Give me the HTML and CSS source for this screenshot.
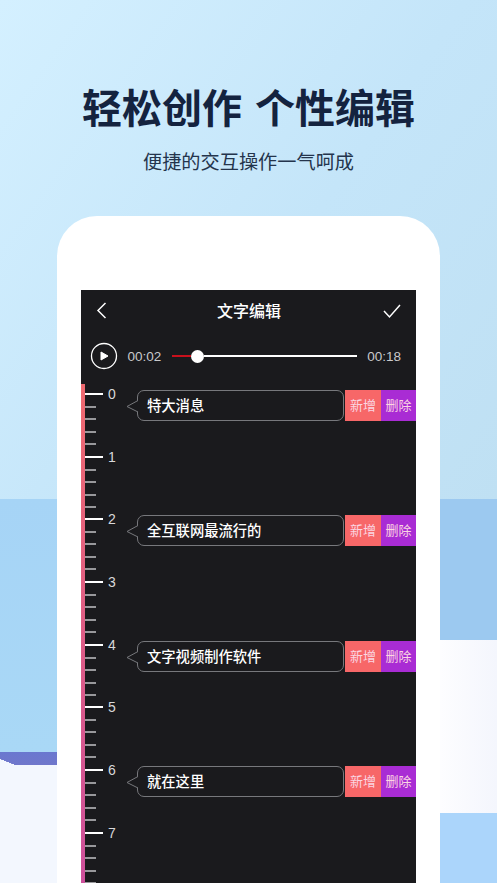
FILE: index.html
```html
<!DOCTYPE html>
<html lang="zh-CN">
<head>
    <meta charset="UTF-8">
    <meta name="viewport" content="width=device-width, initial-scale=1.0">
    <title>轻松创作 个性编辑</title>
    <link rel="stylesheet" href="styles.css">
</head>
<body>
    <div class="page">
        <h1>轻松创作 个性编辑</h1>
        <p class="sub">便捷的交互操作一气呵成</p>
        <div class="phone">
            <div class="screen">
                <div class="nav">
                    <svg class="nav-icon" width="24" height="24" viewBox="0 0 24 24"><path d="M15.5 5 L8 12.5 L15.5 20" fill="none" stroke="#fff" stroke-width="1.5"/></svg>
                    <span class="nav-title">文字编辑</span>
                    <svg class="nav-icon" width="24" height="24" viewBox="0 0 24 24"><path d="M4 13 L9.5 19 L20 7" fill="none" stroke="#fff" stroke-width="1.5"/></svg>
                </div>
                <div class="player">
                    <svg width="28" height="28" viewBox="0 0 28 28"><circle cx="14" cy="14" r="12.5" fill="none" stroke="#fff" stroke-width="1.3"/><path d="M11 10 L18 14 L11 18 Z" fill="#fff" stroke="#fff" stroke-linejoin="round"/></svg>
                    <span class="time">00:02</span>
                    <div class="slider">
                        <div class="slider-done"></div>
                        <div class="slider-knob"></div>
                        <div class="slider-rest"></div>
                    </div>
                    <span class="time">00:18</span>
                </div>
                <div class="timeline">
                    <div class="ruler">
                        <div class="sec"><span>0</span></div>
                        <div class="sec"><span>1</span></div>
                        <div class="sec"><span>2</span></div>
                        <div class="sec"><span>3</span></div>
                        <div class="sec"><span>4</span></div>
                        <div class="sec"><span>5</span></div>
                        <div class="sec"><span>6</span></div>
                        <div class="sec"><span>7</span></div>
                    </div>
                    <div class="captions">
                        <div class="caption">
                            <div class="bubble">
                                <svg class="tail" width="12" height="15" viewBox="0 0 12 15"><path d="M12 1.5 L1 7.5 L12 13" fill="#1a1a1d" stroke="#77787c"/></svg>
                                特大消息
                            </div>
                            <div class="btn btn-add">新增</div>
                            <div class="btn btn-del">删除</div>
                        </div>
                        <div class="caption">
                            <div class="bubble">
                                <svg class="tail" width="12" height="15" viewBox="0 0 12 15"><path d="M12 1.5 L1 7.5 L12 13" fill="#1a1a1d" stroke="#77787c"/></svg>
                                全互联网最流行的
                            </div>
                            <div class="btn btn-add">新增</div>
                            <div class="btn btn-del">删除</div>
                        </div>
                        <div class="caption">
                            <div class="bubble">
                                <svg class="tail" width="12" height="15" viewBox="0 0 12 15"><path d="M12 1.5 L1 7.5 L12 13" fill="#1a1a1d" stroke="#77787c"/></svg>
                                文字视频制作软件
                            </div>
                            <div class="btn btn-add">新增</div>
                            <div class="btn btn-del">删除</div>
                        </div>
                        <div class="caption">
                            <div class="bubble">
                                <svg class="tail" width="12" height="15" viewBox="0 0 12 15"><path d="M12 1.5 L1 7.5 L12 13" fill="#1a1a1d" stroke="#77787c"/></svg>
                                就在这里
                            </div>
                            <div class="btn btn-add">新增</div>
                            <div class="btn btn-del">删除</div>
                        </div>
                    </div>
                </div>
            </div>
        </div>
    </div>
</body>
</html>
```

FILE: styles.css
```css
* {
    box-sizing: border-box;
}
html, body {
    margin: 0;
    padding: 0;
}
body {
    font-family: "Noto Sans CJK SC", "Liberation Sans", sans-serif;
}
.page {
    width: 497px;
    height: 883px;
    overflow: hidden;
    display: flex;
    flex-direction: column;
    align-items: center;
    /* the coloured blocks behind the phone */
    background-color: #f3f7fe;
    background-image:
        linear-gradient(to top right, #f3f7fe 50%, transparent 51%),
        linear-gradient(#6a78cf, #7077cb),
        linear-gradient(#a6d4f6, #a9d8f6),
        linear-gradient(90deg, #fdfdff, #f4f6fd),
        linear-gradient(#abd5fb, #abd5fb),
        linear-gradient(#9cc9f0, #9cc9f0),
        linear-gradient(125deg, #d4f0ff 0%, #c4e5f9 55%, #bfe0f3 100%);
    background-size:
        15px 6px,
        57px 13px,
        57px 253px,
        57px 173px,
        57px 70px,
        57px 141px,
        497px 499px;
    background-position:
        0 759px,
        0 752px,
        0 499px,
        440px 640px,
        440px 813px,
        440px 499px,
        0 0;
    background-repeat: no-repeat;
}
h1 {
    margin: 79px 0 0;
    font-size: 40px;
    line-height: 54px;
    font-weight: 700;
    word-spacing: 4px;
    color: #14233f;
    white-space: nowrap;
}
.sub {
    margin: 15px 0 0;
    font-size: 19.2px;
    line-height: 26px;
    color: #24344c;
}
.phone {
    margin-top: 42px;
    width: 383px;
    flex: 1;
    padding: 74px 24px 0;
    background: #fff;
    border-radius: 40px 40px 0 0;
}
.screen {
    height: 100%;
    background: #1a1a1d;
    color: #fff;
    overflow: hidden;
}
.nav {
    height: 42px;
    padding: 0 12px 3px 9px;
    display: flex;
    justify-content: space-between;
    align-items: center;
}
.nav-title {
    margin-left: 4px;
    font-size: 16px;
    font-weight: 500;
}
.player {
    height: 52px;
    padding: 0 15px 4px 9px;
    display: flex;
    align-items: center;
    gap: 9.5px;
}
.time {
    font-family: "Liberation Sans", sans-serif;
    font-size: 13.5px;
    color: #c9c9cb;
}
.slider {
    flex: 1;
    margin: 0 1px;
    display: flex;
    align-items: center;
}
.slider-done {
    width: 19px;
    height: 2px;
    background: #c9101c;
}
.slider-knob {
    width: 13px;
    height: 13px;
    border-radius: 50%;
    background: #fff;
}
.slider-rest {
    flex: 1;
    height: 2px;
    background: #fff;
}
.timeline {
    display: flex;
}
.ruler {
    width: 45px;
    flex: none;
    border-left: 4px solid;
    border-image: linear-gradient(180deg, #ef6a70, #cd509c) 1;
}
.sec {
    height: 62.7px;
    padding: 0 0 0 23px;
    /* one long tick and four short ones per second */
    background-image:
        linear-gradient(#fff, #fff),
        repeating-linear-gradient(180deg, #98989b 0, #98989b 2px, transparent 2px, transparent 12.54px);
    background-size: 18px 2px, 11px 100%;
    background-position: 0 9px, 0 9px;
    background-repeat: no-repeat;
}
.sec span {
    display: block;
    font-family: "Liberation Sans", sans-serif;
    font-size: 14px;
    line-height: 21px;
    color: #d8d8da;
}
.captions {
    flex: 1;
    padding-top: 6px;
    display: flex;
    flex-direction: column;
    gap: 94.4px;
}
.caption {
    height: 31px;
    display: flex;
}
.bubble {
    position: relative;
    width: 207px;
    margin-left: 11px;
    margin-right: 1px;
    padding-left: 9px;
    border: 1px solid #77787c;
    border-radius: 7px;
    font-size: 14.3px;
    font-weight: 500;
    line-height: 27px;
}
/* little tail on the left of the bubble, overlaps the border */
.tail {
    position: absolute;
    left: -12px;
    top: 8px;
}
.btn {
    font-size: 13px;
    line-height: 30px;
    text-align: center;
    color: #fbd6e2;
}
.btn-add {
    width: 36px;
    background: #f76768;
}
.btn-del {
    width: 35px;
    background: #a92cd4;
}
```
